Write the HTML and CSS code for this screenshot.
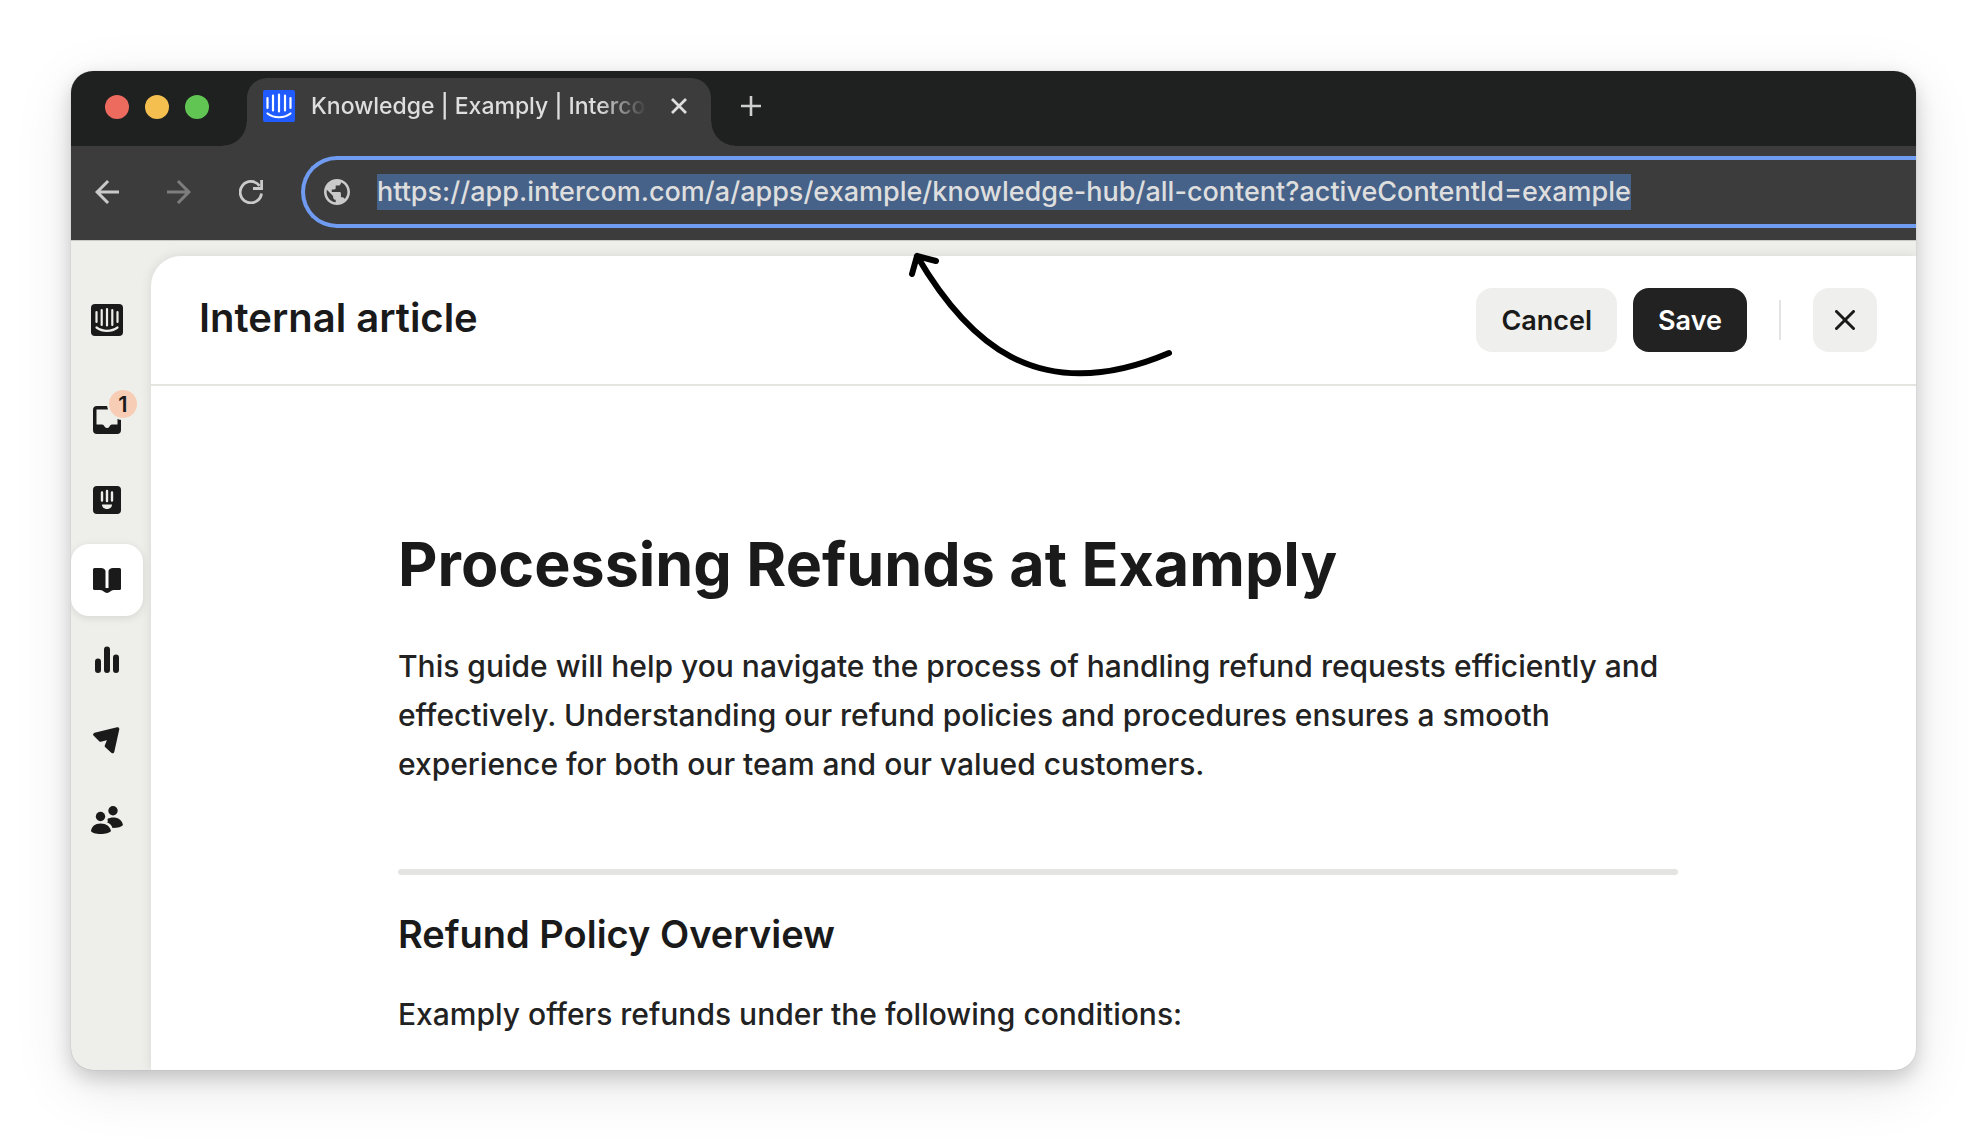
FILE: index.html
```
<!DOCTYPE html>
<html lang="en">
<head>
<meta charset="utf-8">
<meta name="viewport" content="width=device-width, initial-scale=1">
<title>Knowledge | Examply | Intercom</title>
<link rel="stylesheet" href="styles.css">
</head>
<body>
<div class="window">
  <div class="tab-bar">
    <div class="lights">
      <span class="light light-red"></span>
      <span class="light light-yellow"></span>
      <span class="light light-green"></span>
    </div>
    <div class="tab">
      <svg class="favicon" viewBox="0 0 32 32" aria-hidden="true">
        <rect width="32" height="32" rx="2" fill="#1f5bff"/>
        <path d="M4.500 8v10M10 5.500v15M16 4.500v17M22 5.500v15M27.500 8v10M4.500 23.500c6.500 5 16.500 5 23 0" fill="none" stroke="#fff" stroke-width="2.200" stroke-linecap="round"/>
      </svg>
      <span class="tab-title">Knowledge | Examply | Intercom</span>
      <button class="plain tab-close" aria-label="Close tab">
        <svg viewBox="0 0 16 16"><path d="M1 1l14 14M15 1L1 15" stroke="#dedede" stroke-width="2.800" fill="none"/></svg>
      </button>
    </div>
    <button class="plain new-tab" aria-label="New tab">
      <svg viewBox="0 0 20 20"><path d="M10 0v20M0 10h20" stroke="#cfcfcf" stroke-width="2.600" fill="none"/></svg>
    </button>
  </div>

  <div class="toolbar">
    <div class="nav-buttons">
      <button class="plain" aria-label="Back"><svg viewBox="4 4 16 16"><path fill="#cacaca" d="M20 11H7.830l5.590-5.590L12 4l-8 8 8 8 1.410-1.410L7.830 13H20v-2z"/></svg></button>
      <button class="plain" aria-label="Forward"><svg viewBox="4 4 16 16"><path fill="#7d7d7d" d="M12 4l-1.410 1.410L16.170 11H4v2h12.170l-5.580 5.590L12 20l8-8z"/></svg></button>
      <button class="plain" aria-label="Reload"><svg viewBox="0 0 24 24"><path d="M22.500 13.500A10.700 10.700 0 1 1 20.500 5.800" fill="none" stroke="#cacaca" stroke-width="2.800"/><path d="M22.600 0v8.500H14" fill="none" stroke="#cacaca" stroke-width="2.800"/></svg></button>
    </div>
    <div class="omnibox">
      <svg class="globe" viewBox="2 2 20 20" aria-hidden="true"><path fill="#cacaca" d="M12 2C6.480 2 2 6.480 2 12s4.480 10 10 10 10-4.480 10-10S17.520 2 12 2zm-1 17.930c-3.950-.49-7-3.850-7-7.930 0-.62.08-1.210.21-1.790L9 15v1c0 1.100.9 2 2 2v1.930zm6.900-2.540c-.26-.81-1-1.390-1.900-1.390h-1v-3c0-.55-.45-1-1-1H8v-2h2c.55 0 1-.45 1-1V7h2c1.100 0 2-.9 2-2v-.41c2.930 1.190 5 4.060 5 7.410 0 2.080-.8 3.970-2.100 5.390z"/></svg>
      <input class="url" type="text" aria-label="Address" value="https://app.intercom.com/a/apps/example/knowledge-hub/all-content?activeContentId=example">
    </div>
  </div>

  <div class="app">
    <nav class="sidebar" aria-label="Main">
      <a href="#" class="side-item side-logo" aria-label="Home">
        <svg width="32" height="32" viewBox="0 0 32 32"><rect width="32" height="32" rx="4" fill="#1a1a1a"/><path d="M5.500 8v10M10.700 6v15M16 5v16.500M21.300 6v15M26.500 8v10M5.500 23.500c6 4.500 15 4.500 21 0" fill="none" stroke="#eeefea" stroke-width="2.200" stroke-linecap="round"/></svg>
      </a>
      <a href="#" class="side-item" aria-label="Inbox, 1 unread">
        <svg width="28" height="28" viewBox="0 0 28 28"><path fill="#1a1a1a" fill-rule="evenodd" d="M4 0H24a4 4 0 0 1 4 4V24a4 4 0 0 1-4 4H4a4 4 0 0 1-4-4V4a4 4 0 0 1 4-4zM3.500 3.500V18.500H9c1.500 0 2 1 2.500 2 1.500 2 3.500 2 5 0 .5-1 1-2 2.500-2h5.500V3.500z"/></svg>
        <span class="badge">1</span>
      </a>
      <a href="#" class="side-item" aria-label="Fin">
        <svg width="28" height="28" viewBox="0 0 28 28"><rect width="28" height="28" rx="4" fill="#1a1a1a"/><path d="M9 6.500v8M14 5v10M19 6.500v8" fill="none" stroke="#eeefea" stroke-width="2.400" stroke-linecap="round"/><path d="M9 18.500h10c0 6-10 6-10 0z" fill="#eeefea"/></svg>
      </a>
      <a href="#" class="side-item side-active" aria-label="Knowledge" aria-current="page">
        <svg width="28" height="28" viewBox="0 0 28 28"><path fill="#1a1a1a" d="M1.500 2H8c2.500 0 4.500 1.500 4.500 3V22h3V5c0-1.500 2-3 4.500-3h6.500A1.500 1.500 0 0 1 28 3.500V22.500a1.500 1.500 0 0 1-1.500 1.500H20.500c-2.500 0-4 3-6.500 3s-4-3-6.500-3H1.500A1.500 1.500 0 0 1 0 22.500V3.500A1.500 1.500 0 0 1 1.500 2z"/></svg>
      </a>
      <a href="#" class="side-item" aria-label="Reports">
        <svg width="28" height="28" viewBox="0 0 28 28"><path d="M5 15.500v8.500M14 3.500V24M23 11.500V24" stroke="#1a1a1a" stroke-width="6" stroke-linecap="round"/></svg>
      </a>
      <a href="#" class="side-item" aria-label="Outbound">
        <svg width="28" height="28" viewBox="0 0 28 28"><path d="M2 8.500L24.500 3 19.500 25.500 13.500 20 17 11.500 7.500 14z" fill="#1a1a1a" stroke="#1a1a1a" stroke-width="3.600" stroke-linejoin="round"/></svg>
      </a>
      <a href="#" class="side-item" aria-label="Contacts">
        <svg width="32" height="28" viewBox="0 0 32 28"><g fill="#1a1a1a"><circle cx="9.500" cy="10.500" r="4.700"/><circle cx="22" cy="4.700" r="4.700"/><path d="M9.500 17.500c6 0 9.500 3 10.500 7.500-1.500 2-5.500 3-10.500 3S1 27 0 25c.5-4.500 4-7.500 9.500-7.500z"/><path d="M22 11.500c5.500 0 9 2.500 10 7.500-1.500 2-5 3-10.500 3-1-3-2.500-4.500-5.500-5.500 1.500-.5.500-1.500.5-3.500 1.500-1 3.500-1.500 5.500-1.500z"/></g></svg>
      </a>
    </nav>

    <main class="panel">
      <header class="panel-header">
        <h2 class="panel-title">Internal article</h2>
        <div class="actions">
          <button class="btn">Cancel</button>
          <button class="btn btn-dark">Save</button>
          <span class="divider"></span>
          <button class="btn btn-icon" aria-label="Close">
            <svg viewBox="0 0 20 20"><path d="M1.500 1.500l17 17M18.500 1.500l-17 17" fill="none" stroke="#1a1a1a" stroke-width="3" stroke-linecap="round"/></svg>
          </button>
        </div>
      </header>
      <article class="article">
        <h1>Processing Refunds at Examply</h1>
        <p>This guide will help you navigate the process of handling refund requests efficiently and effectively. Understanding our refund policies and procedures ensures a smooth experience for both our team and our valued customers.</p>
        <hr>
        <h2>Refund Policy Overview</h2>
        <p>Examply offers refunds under the following conditions:</p>
      </article>
    </main>
  </div>

  <svg class="pointer" width="320" height="170" viewBox="0 0 320 170" aria-hidden="true">
    <path d="M37 26C85 108 155 180 289 123M32 44L37 26L56 31" fill="none" stroke="#000" stroke-width="6" stroke-linecap="round" stroke-linejoin="round"/>
  </svg>
</div>
</body>
</html>
```
FILE: styles.css
```
* {
  box-sizing: border-box;
}

body {
  margin: 0;
  padding: 71px;
  min-height: 100vh;
  display: flex;
  background: #fff;
  color: #1a1a1a;
  font-family: Inter, "Liberation Sans", sans-serif;
}

h1,
h2,
p {
  margin: 0;
}

svg {
  display: block;
}

button {
  font-family: inherit;
  border: 0;
  cursor: pointer;
}

.window {
  position: relative;
  flex: 1;
  min-width: 0;
  display: flex;
  flex-direction: column;
  overflow: hidden;
  border-radius: 22px;
  background: #eeefea;
  box-shadow: 0 0 1px rgba(0, 0, 0, 0.3), 0 8px 20px rgba(0, 0, 0, 0.18), 0 16px 60px rgba(0, 0, 0, 0.1);
}

/* Browser chrome */

.plain {
  padding: 0;
  background: none;
}

.tab-bar {
  display: flex;
  height: 75px;
  padding: 7px 0 0 34px;
  background: #1f2120;
}

.lights {
  display: flex;
  align-items: center;
  gap: 16px;
  width: 142px;
  padding-bottom: 10px;
}

.light {
  width: 24px;
  height: 24px;
  border-radius: 50%;
}

.light-red {
  background: #ed6a5e;
}

.light-yellow {
  background: #f5bf4f;
}

.light-green {
  background: #61c554;
}

.tab {
  position: relative;
  display: flex;
  align-items: center;
  width: 464px;
  padding: 0 24px 12px 16px;
  border-radius: 20px 20px 0 0;
  background: #3c3c3c;
}

.tab::before,
.tab::after {
  content: "";
  position: absolute;
  bottom: 0;
  width: 24px;
  height: 24px;
}

.tab::before {
  right: 100%;
  background: radial-gradient(circle at 0 0, #1f2120 23px, #3c3c3c 24px);
}

.tab::after {
  left: 100%;
  background: radial-gradient(circle at 100% 0, #1f2120 23px, #3c3c3c 24px);
}

.favicon {
  width: 32px;
  height: 32px;
  flex: none;
}

.tab-title {
  flex: 1;
  min-width: 0;
  margin: 0 24px 0 16px;
  overflow: hidden;
  white-space: nowrap;
  font-size: 23px;
  font-weight: 500;
  line-height: 32px;
  color: #dedede;
  mask-image: linear-gradient(to right, #000 calc(100% - 48px), transparent);
}

.tab-close {
  width: 16px;
  height: 16px;
}

.new-tab {
  width: 20px;
  margin: 0 0 12px 30px;
}

.toolbar {
  display: flex;
  align-items: center;
  padding: 10px 0 12px 24px;
  background: #3c3c3c;
}

.nav-buttons {
  display: flex;
  gap: 48px;
  margin-right: 38px;
}

.nav-buttons button {
  width: 24px;
  height: 24px;
}

.omnibox {
  flex: 1;
  min-width: 0;
  display: flex;
  align-items: center;
  gap: 27px;
  height: 72px;
  padding-left: 19px;
  overflow: hidden;
  border: 4px solid #6f9bf1;
  border-right: 0;
  border-radius: 36px 0 0 36px;
}

.globe {
  width: 26px;
  height: 26px;
  flex: none;
}

.url {
  field-sizing: content;
  height: 36px;
  padding: 0;
  border: 0;
  outline: 0;
  background: #476288;
  color: #dedede;
  font: 500 27px/36px Inter, "Liberation Sans", sans-serif;
}

/* Application */

.app {
  flex: 1;
  display: flex;
  border-top: 1px solid #c9cac5;
}

.sidebar {
  flex: none;
  display: flex;
  flex-direction: column;
  gap: 8px;
  width: 80px;
  padding-top: 43px;
}

.side-item {
  position: relative;
  display: flex;
  align-items: center;
  justify-content: center;
  width: 72px;
  height: 72px;
  border-radius: 18px;
}

.side-logo {
  margin-bottom: 20px;
}

.side-active {
  background: #fff;
  box-shadow: 0 2px 8px rgba(0, 0, 0, 0.1);
}

.badge {
  position: absolute;
  top: 4px;
  right: 4px;
  width: 32px;
  height: 32px;
  border: 2px solid #eeefea;
  border-radius: 50%;
  background: #f7cdb5;
  font-size: 22px;
  font-weight: 600;
  line-height: 28px;
  text-align: center;
  color: #1a1a1a;
}

.panel {
  flex: 1;
  min-width: 0;
  margin-top: 15px;
  border-radius: 30px 0 0 0;
  background: #fff;
  box-shadow: 0 0 12px rgba(0, 0, 0, 0.1);
}

.panel-header {
  display: flex;
  align-items: center;
  justify-content: space-between;
  height: 130px;
  padding: 0 39px 0 48px;
  border-bottom: 2px solid #e4e5e0;
}

.panel-title {
  padding-bottom: 4px;
  font-size: 40px;
  font-weight: 600;
  line-height: 48px;
}

.actions {
  display: flex;
  align-items: center;
}

.btn {
  height: 64px;
  padding: 0 25px;
  border-radius: 16px;
  background: #efefed;
  color: #1a1a1a;
  font-size: 27px;
  font-weight: 600;
}

.btn-dark {
  margin-left: 16px;
  background: #222;
  color: #fff;
}

.btn-icon {
  width: 64px;
  padding: 0 22px;
}

.divider {
  width: 2px;
  height: 40px;
  margin: 0 32px;
  background: #e4e4e2;
}

.article {
  padding: 142px 238px 30px 247px;
}

.article h1 {
  margin-bottom: 42px;
  font-size: 61px;
  font-weight: 700;
  line-height: 72px;
}

.article p {
  color: #222;
  font-size: 30px;
  font-weight: 500;
  line-height: 49px;
}

.article hr {
  height: 6px;
  margin: 80px 0 35px;
  border: 0;
  border-radius: 3px;
  background: #e4e5e0;
}

.article h2 {
  margin-bottom: 32px;
  font-size: 38px;
  font-weight: 600;
  line-height: 48px;
}

/* Hand-drawn callout laid over the page */

.pointer {
  position: absolute;
  left: 809px;
  top: 159px;
  pointer-events: none;
}
```
